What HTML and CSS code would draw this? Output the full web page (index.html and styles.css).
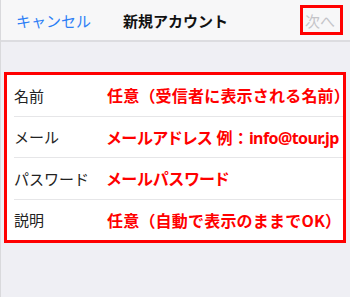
FILE: index.html
```html
<!DOCTYPE html>
<html lang="ja">
<head>
<meta charset="utf-8">
<title>新規アカウント</title>
<link rel="stylesheet" href="styles.css">
</head>
<body>
<div class="screen">
  <header class="navbar">
    <span class="nav-cancel">キャンセル</span>
    <span class="nav-title">新規アカウント</span>
    <span class="nav-next">次へ</span>
  </header>
  <div class="gap"></div>
  <div class="card">
    <div class="row">
      <span class="label">名前</span>
      <span class="note">任意（受信者に表示される名前）</span>
    </div>
    <div class="row">
      <span class="label">メール</span>
      <span class="note"><span class="kana">メールアドレス</span> 例：<span class="latin">info@tour.jp</span></span>
    </div>
    <div class="row">
      <span class="label">パスワード</span>
      <span class="note"><span class="kana">メールパスワード</span></span>
    </div>
    <div class="row">
      <span class="label">説明</span>
      <span class="note">任意（自動で表示のままでOK）</span>
    </div>
  </div>
</div>
</body>
</html>
```
FILE: styles.css
```css
* { box-sizing: border-box; }
html, body {
  margin: 0;
  padding: 0;
  width: 350px;
  height: 297px;
  overflow: hidden;
}
body {
  font-family: "Noto Sans CJK JP", "Noto Sans", sans-serif;
  background: #efeff4;
}
.screen {
  width: 350px;
  height: 297px;
  border-left: 1px solid #d9d9dc;
  background: #efeff4;
}
.navbar {
  height: 42px;
  background: #f7f7f8;
  border-bottom: 2px solid #dcdce0;
  display: flex;
  align-items: center;
  position: relative;
  padding: 0 0 0 15px;
  font-size: 15px;
}
.nav-cancel {
  color: #2e7ff6;
}
.nav-title {
  position: absolute;
  left: 0;
  right: 0;
  text-align: center;
  font-weight: bold;
  color: #111;
  pointer-events: none;
}
.nav-next {
  margin-left: auto;
  margin-right: 7px;
  color: #c4c4c8;
  border: 3px solid #ff0000;
  width: 43px;
  height: 30px;
  display: flex;
  align-items: center;
  justify-content: center;
  padding-right: 3px;
  position: relative;
  z-index: 1;
}
.gap {
  height: 30px;
}
.card {
  margin-left: 3px;
  width: 342px;
  height: 171px;
  border: 3px solid #ff0000;
  background: #fff;
  display: flex;
  flex-direction: column;
}
.row {
  flex: 1;
  display: flex;
  align-items: center;
  margin-left: 7px;
  border-top: 1px solid #e6e6e8;
}
.row:first-child {
  border-top: none;
}
.label {
  flex: 0 0 93px;
  font-size: 15px;
  color: #222;
}
.note {
  font-size: 16px;
  font-weight: bold;
  color: #ff0000;
  letter-spacing: 0.2px;
  white-space: nowrap;
}
.kana {
  font-feature-settings: "palt" 1;
}
.latin {
  font-family: "Noto Sans", sans-serif;
  letter-spacing: -0.6px;
}
```
